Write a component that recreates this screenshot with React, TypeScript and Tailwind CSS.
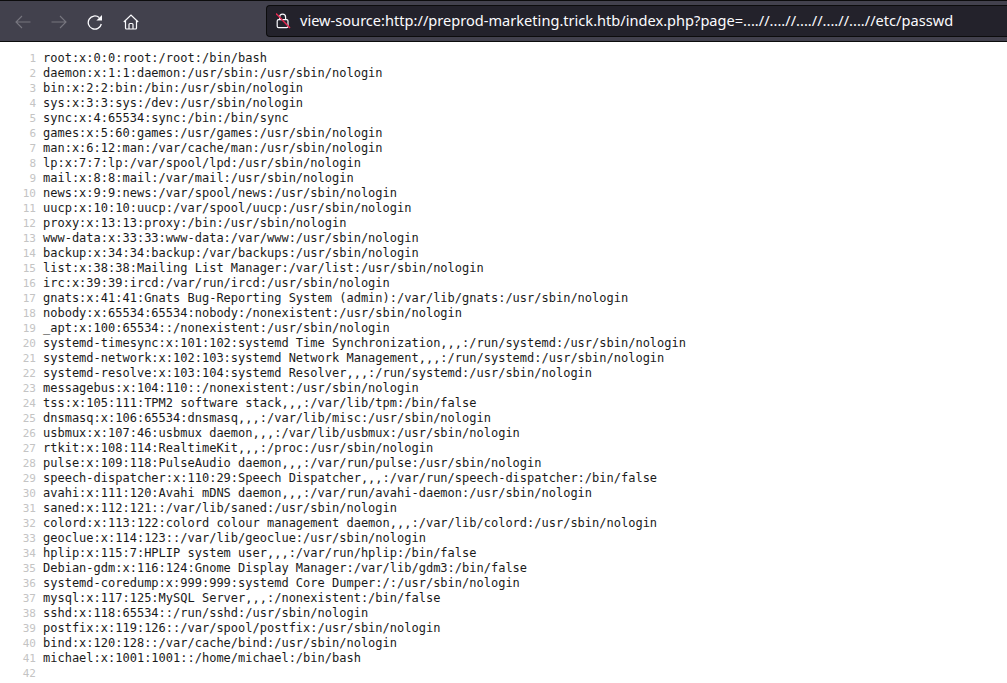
const lines = [
  'root:x:0:0:root:/root:/bin/bash',
  'daemon:x:1:1:daemon:/usr/sbin:/usr/sbin/nologin',
  'bin:x:2:2:bin:/bin:/usr/sbin/nologin',
  'sys:x:3:3:sys:/dev:/usr/sbin/nologin',
  'sync:x:4:65534:sync:/bin:/bin/sync',
  'games:x:5:60:games:/usr/games:/usr/sbin/nologin',
  'man:x:6:12:man:/var/cache/man:/usr/sbin/nologin',
  'lp:x:7:7:lp:/var/spool/lpd:/usr/sbin/nologin',
  'mail:x:8:8:mail:/var/mail:/usr/sbin/nologin',
  'news:x:9:9:news:/var/spool/news:/usr/sbin/nologin',
  'uucp:x:10:10:uucp:/var/spool/uucp:/usr/sbin/nologin',
  'proxy:x:13:13:proxy:/bin:/usr/sbin/nologin',
  'www-data:x:33:33:www-data:/var/www:/usr/sbin/nologin',
  'backup:x:34:34:backup:/var/backups:/usr/sbin/nologin',
  'list:x:38:38:Mailing List Manager:/var/list:/usr/sbin/nologin',
  'irc:x:39:39:ircd:/var/run/ircd:/usr/sbin/nologin',
  'gnats:x:41:41:Gnats Bug-Reporting System (admin):/var/lib/gnats:/usr/sbin/nologin',
  'nobody:x:65534:65534:nobody:/nonexistent:/usr/sbin/nologin',
  '_apt:x:100:65534::/nonexistent:/usr/sbin/nologin',
  'systemd-timesync:x:101:102:systemd Time Synchronization,,,:/run/systemd:/usr/sbin/nologin',
  'systemd-network:x:102:103:systemd Network Management,,,:/run/systemd:/usr/sbin/nologin',
  'systemd-resolve:x:103:104:systemd Resolver,,,:/run/systemd:/usr/sbin/nologin',
  'messagebus:x:104:110::/nonexistent:/usr/sbin/nologin',
  'tss:x:105:111:TPM2 software stack,,,:/var/lib/tpm:/bin/false',
  'dnsmasq:x:106:65534:dnsmasq,,,:/var/lib/misc:/usr/sbin/nologin',
  'usbmux:x:107:46:usbmux daemon,,,:/var/lib/usbmux:/usr/sbin/nologin',
  'rtkit:x:108:114:RealtimeKit,,,:/proc:/usr/sbin/nologin',
  'pulse:x:109:118:PulseAudio daemon,,,:/var/run/pulse:/usr/sbin/nologin',
  'speech-dispatcher:x:110:29:Speech Dispatcher,,,:/var/run/speech-dispatcher:/bin/false',
  'avahi:x:111:120:Avahi mDNS daemon,,,:/var/run/avahi-daemon:/usr/sbin/nologin',
  'saned:x:112:121::/var/lib/saned:/usr/sbin/nologin',
  'colord:x:113:122:colord colour management daemon,,,:/var/lib/colord:/usr/sbin/nologin',
  'geoclue:x:114:123::/var/lib/geoclue:/usr/sbin/nologin',
  'hplip:x:115:7:HPLIP system user,,,:/var/run/hplip:/bin/false',
  'Debian-gdm:x:116:124:Gnome Display Manager:/var/lib/gdm3:/bin/false',
  'systemd-coredump:x:999:999:systemd Core Dumper:/:/usr/sbin/nologin',
  'mysql:x:117:125:MySQL Server,,,:/nonexistent:/bin/false',
  'sshd:x:118:65534::/run/sshd:/usr/sbin/nologin',
  'postfix:x:119:126::/var/spool/postfix:/usr/sbin/nologin',
  'bind:x:120:128::/var/cache/bind:/usr/sbin/nologin',
  'michael:x:1001:1001::/home/michael:/bin/bash',
  '',
];

function BackIcon() {
  return (
    <svg width="16" height="16" viewBox="0 0 16 16" fill="none" stroke="#77767f" strokeWidth="1.1">
      <path d="M1 8H15.5M7 2 1 8l6 6" />
    </svg>
  );
}

function ForwardIcon() {
  return (
    <svg width="16" height="16" viewBox="0 0 16 16" fill="none" stroke="#77767f" strokeWidth="1.1">
      <path d="M15 8H.5M9 2l6 6-6 6" />
    </svg>
  );
}

function ReloadIcon() {
  return (
    <svg width="16" height="16" viewBox="0 0 16 16" fill="none">
      <path d="M14.3 10A6.6 6.6 0 1 1 12.2 3.6" stroke="#fbfbfe" strokeWidth="1.3" />
      <path d="M15 1v5.6H9.4z" fill="#fbfbfe" />
    </svg>
  );
}

function HomeIcon() {
  return (
    <svg width="16" height="16" viewBox="0 0 16 16" fill="none" stroke="#fbfbfe" strokeWidth="1.2">
      <path d="M.8 8 8 1l7.2 7" />
      <path d="M2.5 6.8V14a1 1 0 0 0 1 1h9a1 1 0 0 0 1-1V6.8" />
      <path d="M6 15v-4.5a1 1 0 0 1 1-1h2a1 1 0 0 1 1 1V15" />
    </svg>
  );
}

function InsecureLockIcon() {
  return (
    <svg width="16" height="16" viewBox="0 0 16 16" fill="none" className="shrink-0">
      <path d="M3.6 6.5V4.2a3 3 0 0 1 6 0v2.3" stroke="#fbfbfe" strokeWidth="1.2" />
      <rect x="1.2" y="6.6" width="10.8" height="8" rx="1.4" stroke="#fbfbfe" strokeWidth="1.2" />
      <path d="M0 .5 14 15" stroke="#e22850" strokeWidth="1.5" />
    </svg>
  );
}

export default function App() {
  return (
    <div className="h-[683px] overflow-hidden bg-white">
      <div className="h-[42px] flex items-center bg-[#42414d] border-t border-t-[#0c0c0d] border-b border-b-[#0c0c0d]">
        <div className="flex items-center pl-[15px] pt-[2px] w-[266px] shrink-0">
          <BackIcon />
          <span className="ml-[20px]"><ForwardIcon /></span>
          <span className="ml-[20px]"><ReloadIcon /></span>
          <span className="ml-[20px]"><HomeIcon /></span>
        </div>
        <div className="flex-1 h-[32px] flex items-center bg-[#23222b] border border-[#0c0c0d] border-r-0 rounded-l-[4px] pl-[9px]">
          <InsecureLockIcon />
          <span className="ml-[8px] text-[14.6px] text-[#fbfbfe] whitespace-nowrap [font-family:'Noto_Sans',sans-serif]">
            view-source:http://preprod-marketing.trick.htb/index.php?page=....//....//....//....//....//etc/passwd
          </span>
        </div>
      </div>
      <div className="pt-[9px] text-[12px] leading-[15px] [font-family:'DejaVu_Sans_Mono',monospace]">
        {lines.map((line, i) => (
          <div key={i} className="flex h-[15px] whitespace-pre">
            <span className="w-[36px] shrink-0 text-right text-[#c4c4c4] text-[11px]">{i + 1}</span>
            <span className="ml-[7px] text-[#1a1a1a]">{line}</span>
          </div>
        ))}
      </div>
    </div>
  );
}
